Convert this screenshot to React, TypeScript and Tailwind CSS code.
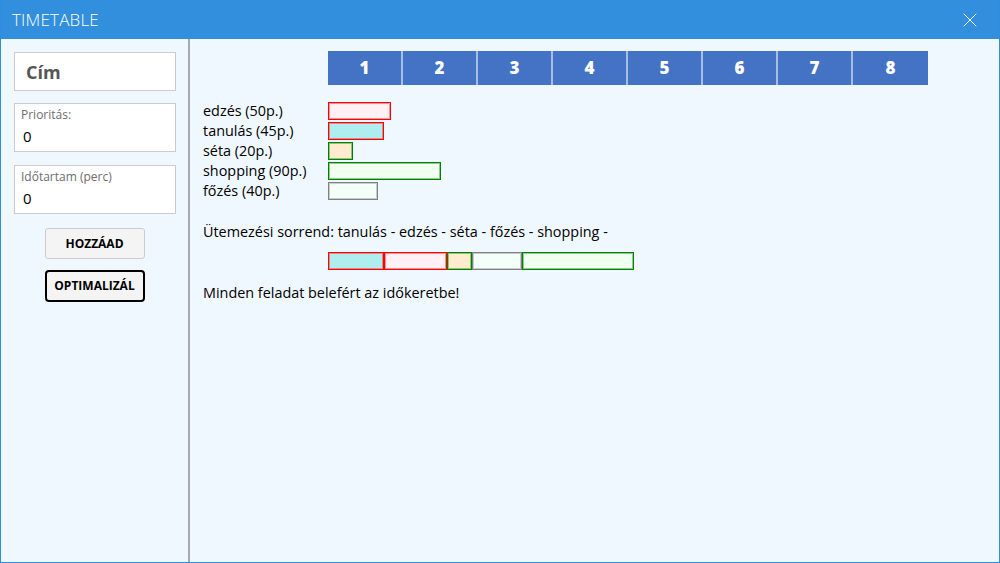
import { X } from "lucide-react";

const tasks = [
  { name: "edzés", min: 50, style: "bg-[#fff0f5] border-[#ff0000] ring-[#ff0000]/40" },
  { name: "tanulás", min: 45, style: "bg-[#afeeee] border-[#ff0000] ring-[#ff0000]/40" },
  { name: "séta", min: 20, style: "bg-[#ffebcd] border-[#008000] ring-[#008000]/40" },
  { name: "shopping", min: 90, style: "bg-[#f0fff0] border-[#008000] ring-[#008000]/40" },
  { name: "főzés", min: 40, style: "bg-[#f5fffa] border-[#808080] ring-[#808080]/40" },
];

const order = ["tanulás", "edzés", "séta", "főzés", "shopping"];
const PX_PER_MIN = 1.25;

function Field({ label, value }: { label: string; value: string }) {
  return (
    <div className="flex h-[49px] w-[162px] flex-col border border-[#cccccc] bg-white px-[6px] pt-[3px]">
      <span className="text-[12px] leading-[16px] text-[#6d6d6d]">{label}</span>
      <span className="mt-[3px] pl-[2px] text-[15px] leading-[20px] text-black">{value}</span>
    </div>
  );
}

export default function App() {
  const byName = Object.fromEntries(tasks.map((t) => [t.name, t]));
  return (
    <div
      className="flex h-[563px] w-[1000px] flex-col overflow-hidden border-x border-b border-[#2e8ddd] bg-[#f0f8ff] text-[14.4px] text-black"
      style={{ fontFamily: '"Open Sans", "Noto Sans", sans-serif' }}
    >
      <div className="flex h-[39px] shrink-0 items-center justify-between bg-[#318fdd] pl-[11px] pr-[17px]">
        <span className="text-[17px] font-light tracking-[0.2px] text-white">TIMETABLE</span>
        <X size={24} strokeWidth={1} className="text-white" />
      </div>
      <div className="flex flex-1">
        <div className="flex w-[189px] shrink-0 flex-col items-center border-r-2 border-[#a6a9ae] pt-[13px]">
          <div className="ml-[1px] flex h-[39px] w-[162px] items-center border border-[#cccccc] bg-white px-[11px] pt-[2px]">
            <span className="text-[18px] font-bold text-[#555555]">Cím</span>
          </div>
          <div className="ml-[1px] mt-[12px]">
            <Field label="Prioritás:" value="0" />
          </div>
          <div className="ml-[1px] mt-[13px]">
            <Field label="Időtartam (perc)" value="0" />
          </div>
          <button className="mt-[14px] h-[31px] w-[100px] rounded-[3px] border border-[#cccccc] bg-[#f4f4f4] text-[12px] font-bold text-black">
            HOZZÁAD
          </button>
          <button className="mt-[11px] h-[32px] w-[100px] rounded-[4px] border-2 border-black bg-[#f4f4f4] text-[12px] font-bold text-black">
            OPTIMALIZÁL
          </button>
        </div>
        <div className="flex flex-1 flex-col pl-[13px] pt-[12px]">
          <div className="ml-[125px] flex h-[34px] w-[600px] bg-[#4472c4]">
            {[1, 2, 3, 4, 5, 6, 7, 8].map((n) => (
              <div
                key={n}
                className="flex w-[75px] items-center justify-center border-r-2 border-[#a7bde6] text-[17px] font-extrabold text-white last:border-r-0"
              >
                {n}
              </div>
            ))}
          </div>
          <div className="mt-[16px] flex flex-col">
            {tasks.map((t) => (
              <div key={t.name} className="flex h-[20px] items-center">
                <span className="w-[125px] leading-[20px]">
                  {t.name} ({t.min}p.)
                </span>
                <div
                  className={`h-[18px] border ring-1 ring-inset ${t.style}`}
                  style={{ width: t.min * PX_PER_MIN }}
                />
              </div>
            ))}
          </div>
          <div className="mt-[21px] leading-[20px]">
            Ütemezési sorrend: {order.map((n) => `${n} - `).join("")}
          </div>
          <div className="ml-[125px] mt-[10px] flex h-[18px]">
            {order.map((n) => {
              const t = byName[n];
              return (
                <div
                  key={n}
                  className={`h-[18px] border ring-1 ring-inset ${t.style}`}
                  style={{ width: t.min * PX_PER_MIN }}
                />
              );
            })}
          </div>
          <div className="mt-[13px] leading-[20px]">Minden feladat belefért az időkeretbe!</div>
        </div>
      </div>
    </div>
  );
}
